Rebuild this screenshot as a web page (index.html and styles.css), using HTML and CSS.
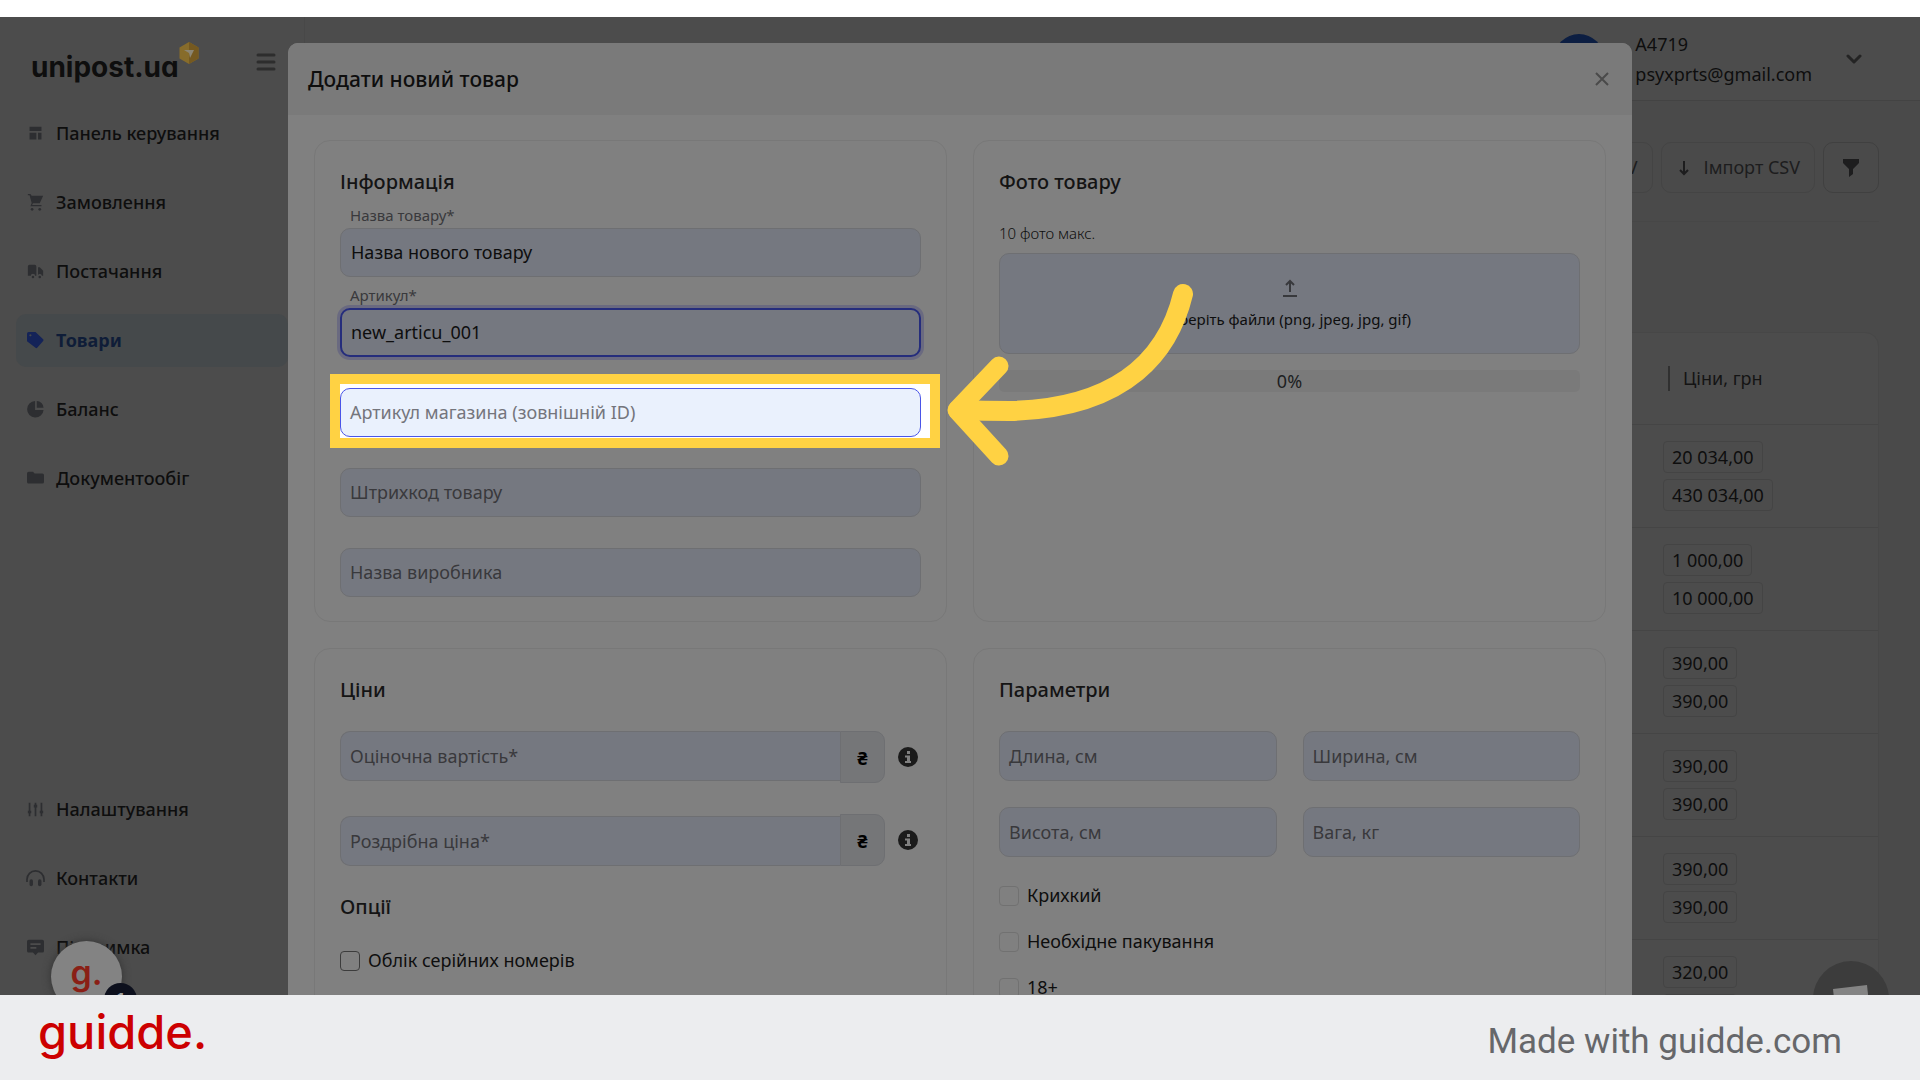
FILE: index.html
```html
<!DOCTYPE html>
<html lang="uk">
<head>
<meta charset="utf-8">
<meta name="viewport" content="width=device-width, initial-scale=1">
<title>Додати новий товар</title>
<link rel="stylesheet" href="styles.css">
</head>
<body>
<div class="stage">
  <aside class="sidebar">
    <div class="brand">
      <span class="brand-name">unipost.ua</span>
      <svg class="brand-mark" width="20" height="22" viewBox="0 0 20 22"><path d="M10 0l9.500 5.500v11L10 22 .5 16.500v-11z" fill="#876c2b"/><path d="M10 0l9.500 5.500v11L10 22z" fill="#755920"/><path d="M5 8h10l-4 8-1-5z" fill="#8c8674"/></svg>
      <button class="menu-toggle" type="button" aria-label="Меню"><svg width="20" height="18" viewBox="0 0 20 18" fill="none" stroke="#2d2d2d" stroke-width="3" stroke-linecap="round"><path d="M2 2h16M2 9h16M2 16h16"/></svg></button>
    </div>
    <nav class="nav">
      <a class="nav-item" href="#"><svg viewBox="0 0 20 20"><path d="M3 2h14v5H3zM3 9h8v8H3zM13 9h4v8h-4z"/></svg>Панель керування</a>
      <a class="nav-item" href="#"><svg viewBox="0 0 20 20"><path d="M1 0h3l1.500 2H19l-4 9H7l-1 2h11v1.500H4l1.500-4L3 1.500H1z"/><circle cx="6" cy="18" r="1.600"/><circle cx="15" cy="18" r="1.600"/></svg>Замовлення</a>
      <a class="nav-item" href="#"><svg viewBox="0 0 20 20"><path d="M1 4q0-2 2-2h6q2 0 2 2v11H9.500a2.500 2.500 0 0 0-5 0H1zM13 5h2l4 4v6h-1.500a2.500 2.500 0 0 0-4.500-1z"/><circle cx="7" cy="16.500" r="1.500"/><circle cx="15" cy="16.500" r="1.500"/></svg>Постачання</a>
      <a class="nav-item nav-item-active" href="#"><svg viewBox="0 0 20 20"><path fill-rule="evenodd" d="M0 2q0-2 2-2h8l9 8.500q1 1 0 2l-7 8q-1 1-2 0L0 11zM4 2.500a1.300 1.300 0 1 0 .01 0z"/></svg>Товари</a>
      <a class="nav-item" href="#"><svg viewBox="0 0 20 20"><path d="M9.500 0v10.500H19.500a9.700 9.700 0 1 1-10-10.500z"/><path d="M11.500 0A8.500 8.500 0 0 1 19.500 8h-8z"/></svg>Баланс</a>
      <a class="nav-item" href="#"><svg viewBox="0 0 20 20"><path d="M0 4q0-2 2-2h5l2 2h9q2 0 2 2v8q0 2-2 2H2q-2 0-2-2z"/></svg>Документообіг</a>
    </nav>
    <nav class="nav nav-bottom">
      <a class="nav-item" href="#"><svg viewBox="0 0 20 20" fill="none" stroke="currentColor" stroke-width="2"><path d="M3 2v16M10 2v16M17 2v16"/><path d="M1 13h4M8 6h4M15 13h4" stroke-width="3"/></svg>Налаштування</a>
      <a class="nav-item" href="#"><svg viewBox="0 0 20 20"><path d="M0 14v-3a10 10 0 0 1 20 0v3" fill="none" stroke="currentColor" stroke-width="2"/><rect x="3" y="11" width="4" height="8" rx="2"/><rect x="13" y="11" width="4" height="8" rx="2"/></svg>Контакти</a>
      <a class="nav-item" href="#"><svg viewBox="0 0 20 20"><path fill-rule="evenodd" d="M2 1h16q2 0 2 2v11q0 2-2 2h-5l-3 3-3-3H2q-2 0-2-2V3q0-2 2-2zM4 5v2h12V5zM4 9.500v2h7v-2z"/></svg>Підтримка</a>
    </nav>
  </aside>

  <main class="main">
    <header class="topbar">
      <span class="avatar"></span>
      <div class="account"><span>A4719</span><span>psyxprts@gmail.com</span></div>
      <button class="account-toggle" type="button" aria-label="Обліковий запис"><svg width="16" height="10" viewBox="0 0 16 10" fill="none" stroke="#242424" stroke-width="3" stroke-linecap="round" stroke-linejoin="round"><path d="M2 2l6 6 6-6"/></svg></button>
    </header>
    <div class="content">
      <div class="toolbar">
        <button class="tool" type="button">Експорт CSV</button>
        <button class="tool" type="button"><svg width="12" height="16" viewBox="0 0 12 16" fill="none" stroke="currentColor" stroke-width="2"><path d="M6 1v13M2 10l4 4 4-4"/></svg>Імпорт CSV</button>
        <button class="tool tool-filter" type="button" aria-label="Фільтр"><svg width="18" height="20" viewBox="0 0 18 20" fill="currentColor"><path d="M1 1h16v4l-6 6v5l-4 3v-8L1 5z"/></svg></button>
      </div>
      <div class="table-frame">
        <table class="goods">
          <thead><tr><td></td><th scope="col"><span class="col-title">Ціни, грн</span></th></tr></thead>
          <tbody>
            <tr><td></td><td><div class="prices"><span class="price">20 034,00</span><span class="price">430 034,00</span></div></td></tr>
            <tr><td></td><td><div class="prices"><span class="price">1 000,00</span><span class="price">10 000,00</span></div></td></tr>
            <tr><td></td><td><div class="prices"><span class="price">390,00</span><span class="price">390,00</span></div></td></tr>
            <tr><td></td><td><div class="prices"><span class="price">390,00</span><span class="price">390,00</span></div></td></tr>
            <tr><td></td><td><div class="prices"><span class="price">390,00</span><span class="price">390,00</span></div></td></tr>
            <tr><td></td><td><div class="prices"><span class="price">320,00</span><span class="price">320,00</span></div></td></tr>
          </tbody>
        </table>
      </div>
    </div>
  </main>

  <div class="overlay">
    <section class="modal" role="dialog" aria-labelledby="modal-title">
      <header class="modal-head">
        <h1 class="modal-title" id="modal-title">Додати новий товар</h1>
        <button class="close" type="button" aria-label="Закрити"><svg width="14" height="14" viewBox="0 0 14 14" fill="none" stroke="currentColor" stroke-width="2"><path d="M1 1l12 12M13 1L1 13"/></svg></button>
      </header>
      <form class="modal-body">
        <section class="card">
          <h2 class="card-title">Інформація</h2>
          <div class="field"><label for="name">Назва товару*</label><input id="name" type="text" value="Назва нового товару"></div>
          <div class="field field-focused"><label for="sku">Артикул*</label><input id="sku" type="text" value="new_articu_001"></div>
          <div class="field field-empty field-marked">
            <label for="ext">Артикул магазина (зовнішній ID)</label><input id="ext" type="text">
            <span class="marker"></span>
            <svg class="arrow" width="250" height="184" viewBox="0 0 250 184" fill="none" stroke="#ffd243" stroke-linecap="round" stroke-linejoin="round"><path d="M239 12C226 66 186 126 66 129Q40 129 14 128" stroke-width="20"/><path d="M55 84L13 128l42 46" stroke-width="19"/></svg>
          </div>
          <div class="field field-empty"><label for="barcode">Штрихкод товару</label><input id="barcode" type="text"></div>
          <div class="field field-empty"><label for="maker">Назва виробника</label><input id="maker" type="text"></div>
        </section>

        <section class="card">
          <h2 class="card-title">Фото товару</h2>
          <p class="hint">10 фото макс.</p>
          <button class="dropzone" type="button">
            <svg width="16" height="18" viewBox="0 0 16 18" fill="none" stroke="#38393c" stroke-width="2"><path d="M8 13V2M4 6l4-4 4 4M1 17h14"/></svg>
            <span>Оберіть файли (png, jpeg, jpg, gif)</span>
          </button>
          <div class="progress">0%</div>
        </section>

        <section class="card">
          <h2 class="card-title">Ціни</h2>
          <div class="money-list">
            <div class="money"><div class="field field-empty"><label for="cost">Оціночна вартість*</label><input id="cost" type="text"></div><span class="addon">₴</span><svg class="info" viewBox="0 0 20 20"><circle cx="10" cy="10" r="10" fill="#1b1b1b"/><path d="M9 4h3v3H9zM7 8.500h5V14h1v2H7v-2h2v-3.500H7z" fill="#808080"/></svg></div>
            <div class="money money-end"><div class="field field-empty"><label for="retail">Роздрібна ціна*</label><input id="retail" type="text"></div><span class="addon">₴</span><svg class="info" viewBox="0 0 20 20"><circle cx="10" cy="10" r="10" fill="#1b1b1b"/><path d="M9 4h3v3H9zM7 8.500h5V14h1v2H7v-2h2v-3.500H7z" fill="#808080"/></svg></div>
          </div>
          <h2 class="card-title card-title-next">Опції</h2>
          <div class="checks"><label class="check check-dark"><input type="checkbox">Облік серійних номерів</label></div>
        </section>

        <section class="card">
          <h2 class="card-title">Параметри</h2>
          <div class="sizes">
            <div class="field field-empty"><label for="len">Длина, см</label><input id="len" type="text"></div>
            <div class="field field-empty"><label for="wid">Ширина, см</label><input id="wid" type="text"></div>
            <div class="field field-empty"><label for="hei">Висота, см</label><input id="hei" type="text"></div>
            <div class="field field-empty"><label for="wei">Вага, кг</label><input id="wei" type="text"></div>
          </div>
          <div class="checks">
            <label class="check"><input type="checkbox">Крихкий</label>
            <label class="check"><input type="checkbox">Необхідне пакування</label>
            <label class="check"><input type="checkbox">18+</label>
          </div>
        </section>
      </form>
    </section>
  </div>

  <div class="bubble"><span class="bubble-text">g.</span></div>
  <div class="bubble-badge">1</div>
  <svg class="chat" width="76" height="76" viewBox="0 0 76 76"><circle cx="38" cy="38" r="38" fill="#3c3c3c"/><path d="M20 28l34-4 3 28-34 3z" fill="#848484"/></svg>
</div>
<footer class="footer"><span class="footer-logo">guidde.</span><span class="footer-note">Made with guidde.com</span></footer>
</body>
</html>
```
FILE: styles.css
```css
* { box-sizing: border-box; }

body {
  margin: 0;
  height: 100vh;
  display: flex;
  flex-direction: column;
  padding-top: 17px;
  background: #fff;
  color: #0e0e0e;
  font: 18px/25px "Noto Sans", sans-serif;
}

button, input { font: inherit; color: inherit; }
button { border: 0; background: none; padding: 0; }
h1, h2, p { margin: 0; font-weight: 500; }

.stage {
  flex: 1;
  min-height: 0;
  position: relative;
  overflow: hidden;
  display: flex;
  background: #4c4c4c;
}

/* sidebar */
.sidebar {
  width: 305px;
  flex: none;
  display: flex;
  flex-direction: column;
  border-right: 1px solid #484848;
}
.brand {
  height: 90px;
  display: flex;
  align-items: flex-start;
  padding: 25px 28px 0 31px;
}
.brand-name {
  font: 700 28px/50px Inter, sans-serif;
  font-feature-settings: "cv11";
}
.brand-mark { flex: none; }
.menu-toggle { margin: 11px 0 0 auto; line-height: 0; }
.menu-toggle svg { display: block; }
.nav {
  display: flex;
  flex-direction: column;
  gap: 16px;
  padding: 0 16px;
}
.nav-bottom { margin-top: 278px; }
.nav-item {
  height: 53px;
  flex: none;
  display: flex;
  align-items: center;
  gap: 12px;
  padding-left: 11px;
  border-radius: 10px;
  color: #0e0e0e;
  font-weight: 500;
  text-decoration: none;
}
.nav-item svg { width: 17px; height: 17px; overflow: visible; color: #2d2e31; }
.nav-item svg:not([fill]) { fill: currentColor; }
.nav-item-active { background: #45494b; color: #0f1d38; font-weight: 700; }
.nav-item-active svg { color: #142358; }

/* page behind the dialog */
.main { flex: 1; min-width: 0; background: #4a4a4a; }
.topbar {
  height: 84px;
  display: flex;
  align-items: center;
  justify-content: flex-end;
  padding-right: 58px;
  background: #4c4c4c;
  border-bottom: 1px solid #434343;
}
.avatar { width: 50px; height: 50px; border-radius: 50%; background: #0c1e42; }
.account { display: flex; flex-direction: column; margin: 0 34px 0 31px; line-height: 30px; }
.account-toggle svg { display: block; }
.content { padding: 41px 41px 0; }
.toolbar {
  display: flex;
  justify-content: flex-end;
  gap: 8px;
  padding-bottom: 28px;
  border-bottom: 1px solid #474747;
}
.tool {
  height: 51px;
  display: flex;
  align-items: center;
  gap: 14px;
  padding: 0 14px 0 16px;
  border: 1px solid #444;
  border-radius: 10px;
  color: #1d1d1e;
}
.tool-filter { padding: 0 18px; border-color: #404040; }
.table-frame {
  margin-top: 110px;
  border: 1px solid #474747;
  border-radius: 14px;
  background: #4c4c4c;
}
.goods { width: 100%; border-collapse: collapse; table-layout: fixed; }
.goods tr > :last-child { width: 231px; }
.goods th, .goods td { padding: 16px; border-bottom: 1px solid #454545; text-align: left; }
.goods th { height: 91px; font-weight: 400; color: #141414; }
.col-title { display: block; margin-left: 5px; padding-left: 13px; border-left: 2px solid #303030; }
.prices { display: flex; flex-direction: column; align-items: flex-start; gap: 6px; }
.price { height: 32px; padding: 3px 8px; border: 1px solid #444; border-radius: 4px; line-height: 25px; }

/* dialog */
.overlay {
  position: absolute;
  inset: 0;
  display: flex;
  justify-content: center;
  align-items: flex-start;
  padding-top: 26px;
}
.modal {
  width: 70%;
  border-radius: 10px 10px 0 0;
  background: #808080;
}
.modal-head {
  height: 72px;
  display: flex;
  align-items: center;
  justify-content: space-between;
  padding: 0 23px 0 20px;
  border-radius: 10px 10px 0 0;
  background: #7a7a7a;
}
.modal-title { font-size: 21px; line-height: 30px; }
.close { color: #4a4a4a; }
.close svg { display: block; }
.modal-body {
  display: grid;
  grid-template-columns: 1fr 1fr;
  gap: 26px;
  padding: 25px 26px 26px;
}
.card {
  padding: 26px 25px 24px;
  border: 1px solid #787878;
  border-radius: 16px;
}
.card-title { font-size: 20px; line-height: 30px; color: #141414; }

.field { position: relative; display: grid; grid-template-rows: 31px 49px; }
.field input {
  grid-row: 2;
  grid-column: 1;
  width: 100%;
  min-width: 0;
  padding: 0 10px;
  border: 1px solid #6e6f72;
  border-radius: 10px;
  background: #757880;
  outline: 0;
}
.field label {
  grid-row: 1;
  grid-column: 1;
  align-self: end;
  padding-left: 10px;
  font-size: 15px;
  color: #39393c;
}
.field-empty label {
  grid-row: 2;
  align-self: center;
  z-index: 2;
  font-size: 18px;
  pointer-events: none;
}
.field-focused input { border: 2px solid #252d7c; box-shadow: 0 0 0 3px #6a6a80; padding: 0 9px; }
.field-marked input { position: relative; z-index: 1; border: 1px solid #4a55e8; background: #eaf1fd; }
.field-marked label { color: #74757c; }
.marker {
  position: absolute;
  inset: 17px -19px -11px -10px;
  border: 10px solid #ffd243;
  background: #fff;
}
.arrow { position: absolute; top: -75px; left: calc(100% + 23px); z-index: 3; }

.hint { margin: 24px 0 8px; font-size: 15px; line-height: 24px; font-weight: 300; }
.dropzone {
  width: 100%;
  height: 101px;
  display: flex;
  flex-direction: column;
  align-items: center;
  justify-content: center;
  gap: 10px;
  padding-top: 4px;
  border: 1px solid #6e6f72;
  border-radius: 10px;
  background: #757880;
  font-size: 15px;
}
.progress {
  margin-top: 16px;
  border-radius: 5px;
  background: #7a7a7a;
  color: #1d1f22;
  line-height: 22px;
  text-align: center;
}

.money-list { display: grid; gap: 31px; margin-top: 26px; }
.money { display: flex; height: 52px; }
.money .field, .sizes .field { flex: 1; grid-template-rows: 50px; }
.money .field > *, .sizes .field > * { grid-row: 1; }
.money-end .field { align-content: end; }
.money input { border-right: 0; border-radius: 10px 0 0 10px; }
.addon {
  width: 45px;
  border: 1px solid #6e6f72;
  border-radius: 0 10px 10px 0;
  background: #757678;
  line-height: 52px;
  text-align: center;
  font-weight: 700;
  color: #000;
}
.info { width: 20px; height: 20px; margin: 0 3px 0 13px; align-self: center; }
.card-title-next { margin-top: 26px; }

.sizes { display: grid; grid-template-columns: 1fr 1fr; gap: 26px; margin-top: 26px; }
.checks { display: grid; gap: 21px; margin-top: 26px; }
.check { display: flex; align-items: center; gap: 8px; color: #0e0e0e; }
.check input {
  appearance: none;
  width: 20px;
  height: 20px;
  margin: 0;
  border: 1px solid #717171;
  border-radius: 4px;
}
.check-dark input { border-color: #3c3c3c; }

/* floating widgets */
.bubble {
  position: absolute;
  left: 51px;
  bottom: -17px;
  width: 71px;
  height: 71px;
  border-radius: 50%;
  background: #838383;
  box-shadow: 0 0 8px #333;
  text-align: center;
}
.bubble-text { font: 600 34px/64px Inter, sans-serif; color: #8a1f16; }
.bubble-badge {
  position: absolute;
  left: 104px;
  bottom: -21px;
  width: 33px;
  height: 33px;
  border-radius: 50%;
  background: #0d101d;
  color: #a0a0a0;
  font: 700 16px/33px Inter, sans-serif;
  text-align: center;
}
.chat { position: absolute; right: 31px; bottom: -42px; }

.footer {
  height: 85px;
  flex: none;
  display: flex;
  align-items: center;
  justify-content: space-between;
  padding: 0 78px 0 38px;
  background: #ecedef;
}
.footer-logo { font: 500 47px/60px Inter, sans-serif; color: #c00; padding-bottom: 12px; }
.footer-note { font: 400 35px/48px Roboto, sans-serif; color: #66676a; padding-top: 8px; }
```
